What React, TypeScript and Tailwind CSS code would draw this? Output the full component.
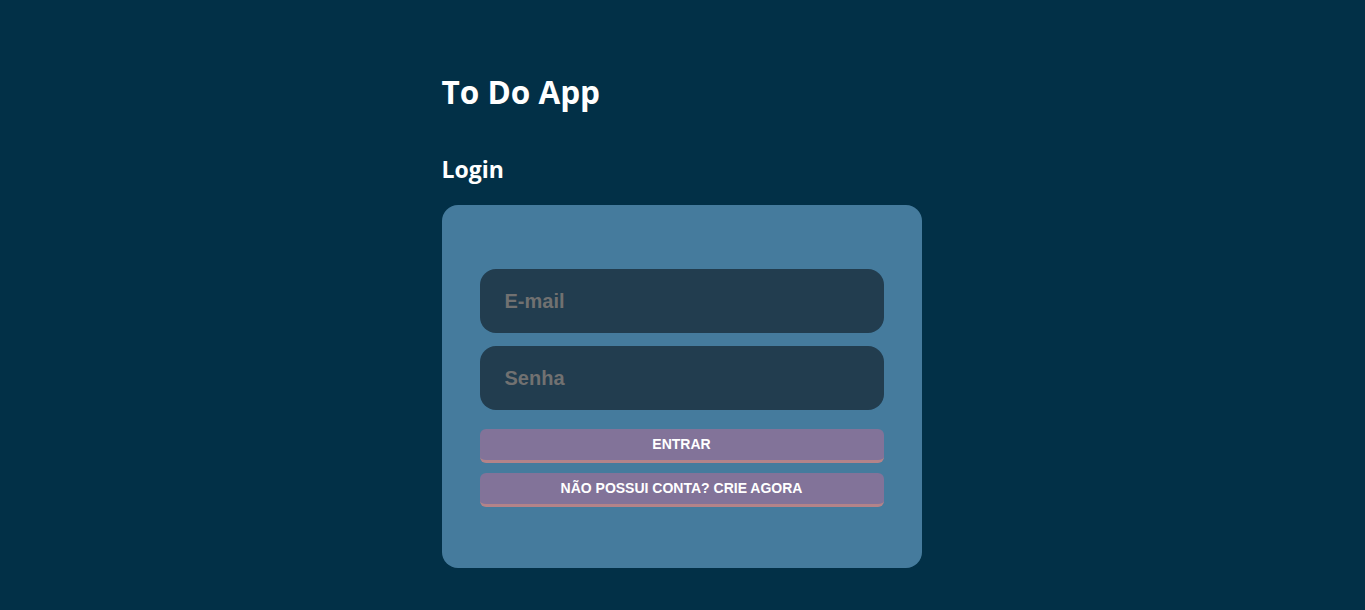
import React from "react";

function App() {
  return (
    <main className="min-h-screen w-full bg-[#023047] font-['Open_Sans','Noto_Sans',sans-serif]">
      <div className="mx-auto w-[480px] pt-[70px] -translate-x-[1px]">
        {/* header */}
        <h1 className="text-[31.5px] font-bold text-white leading-[44px]">To Do App</h1>
        <h2 className="mt-[40px] text-[23px] font-bold text-white leading-[30px]">Login</h2>

        {/* card */}
        <form className="mt-[21px] flex flex-col rounded-[16px] bg-[#457b9d] px-[38px] pt-[64px] pb-[61px]">
          <input
            type="email"
            placeholder="E-mail"
            className="h-[64px] w-full rounded-[16px] bg-[#223d4f] px-[25px] font-['Liberation_Sans',Arial,sans-serif] text-[20px] font-bold text-white outline-none placeholder:text-[#717171]"
          />
          <input
            type="password"
            placeholder="Senha"
            className="mt-[13px] h-[64px] w-full rounded-[16px] bg-[#223d4f] px-[25px] font-['Liberation_Sans',Arial,sans-serif] text-[20px] font-bold text-white outline-none placeholder:text-[#717171]"
          />
          <button
            type="button"
            className="mt-[19px] h-[34px] w-full rounded-[6px] border-b-[3px] border-[#b38389] bg-[#827399] font-['Liberation_Sans',Arial,sans-serif] text-[14px] font-bold uppercase text-white"
          >
            Entrar
          </button>
          <button
            type="button"
            className="mt-[10px] h-[34px] w-full rounded-[6px] border-b-[3px] border-[#b38389] bg-[#827399] font-['Liberation_Sans',Arial,sans-serif] text-[14px] font-bold uppercase text-white"
          >
            Não possui conta? Crie agora
          </button>
        </form>
      </div>
    </main>
  );
}

export default App;
